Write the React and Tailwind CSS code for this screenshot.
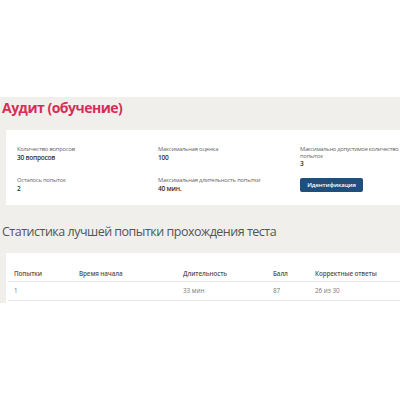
export default function App() {
  const font = { fontFamily: '"Open Sans", "Noto Sans", sans-serif' };
  const label = "text-[5.8px] leading-[7px] tracking-[-0.2px] text-[#666]";
  const value = "text-[6.6px] leading-[9px] tracking-[-0.25px] font-semibold text-[#333]";
  return (
    <div className="w-[400px] h-[400px] bg-white overflow-hidden" style={font}>
      <div className="h-[97px]" />
      <div className="bg-[#f0efec] h-[206px] flex flex-col">
        <h1 className="text-[14px] leading-[20px] tracking-[-0.5px] font-bold text-[#d42f56] pl-[2px] pt-[1px] h-[33px]">
          Аудит (обучение)
        </h1>
        <div className="ml-[6px] bg-white h-[75px] pl-[11px] flex flex-col">
          <div className="grid grid-cols-[141px_142px_1fr] h-[46px] pt-[16px]">
            <div>
              <div className={label}>Количество вопросов</div>
              <div className={value}>30 вопросов</div>
            </div>
            <div>
              <div className={label}>Максимальная оценка</div>
              <div className={value}>100</div>
            </div>
            <div>
              <div className="text-[5.8px] leading-[7px] tracking-[-0.3px] text-[#666] whitespace-nowrap">Максимально допустимое количество</div>
              <div className={label}>попыток</div>
              <div className={`${value} -mt-[1px]`}>3</div>
            </div>
          </div>
          <div className="grid grid-cols-[141px_142px_1fr]">
            <div className="pt-[1px]">
              <div className={label}>Осталось попыток</div>
              <div className={value}>2</div>
            </div>
            <div className="pt-[1px]">
              <div className={label}>Максимальная длительность попытки</div>
              <div className={value}>40 мин.</div>
            </div>
            <div className="pt-[2px]">
              <button className="block w-[63px] h-[14px] rounded-[2px] bg-[#1f4f7d] text-white text-[6px] leading-[14px] tracking-[-0.1px] font-semibold">
                Идентификация
              </button>
            </div>
          </div>
        </div>
        <div className="h-[48px] flex items-center pl-[2px] pt-[5px]">
          <h2 className="text-[12.5px] leading-[18px] tracking-[-0.5px] text-[#555] whitespace-nowrap">
            Статистика лучшей попытки прохождения теста
          </h2>
        </div>
        <div className="ml-[6px] bg-white flex-1 pt-[13px] pl-[2px]">
          <div className="grid grid-cols-[65px_104px_90px_42px_1fr] text-[6.3px] tracking-[-0.1px] text-[#555] border-b border-[#e6e6e6] h-[16px] items-center pl-[6px]">
            <span className="font-semibold">Попытки</span>
            <span className="font-semibold">Время начала</span>
            <span className="font-semibold">Длительность</span>
            <span className="font-semibold">Балл</span>
            <span className="font-semibold">Корректные ответы</span>
          </div>
          <div className="grid grid-cols-[65px_104px_90px_42px_1fr] text-[6.3px] text-[#777] border-b border-[#e6e6e6] h-[19px] items-center pl-[6px]">
            <span>1</span>
            <span></span>
            <span>33 мин</span>
            <span>87</span>
            <span>26 из 30</span>
          </div>
        </div>
      </div>
    </div>
  );
}
